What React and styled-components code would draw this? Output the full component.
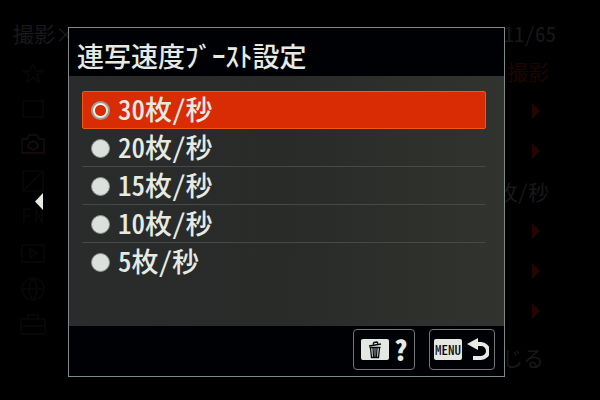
import React, { useState } from "react";
import styled, { createGlobalStyle } from "styled-components";

// CSS
const GlobalStyle = createGlobalStyle`
  * {
    box-sizing: border-box;
  }
  body {
    margin: 0;
    background-color: #000001;
    color: #e6eae4;
    font-family: "Noto Sans CJK JP", "Noto Sans", sans-serif;
    font-feature-settings: "hwid";
  }
`;
const Screen = styled.div`
  display: grid;
  min-height: 100vh;
`;
const MenuPage = styled.div`
  grid-area: 1 / 1;
  display: flex;
  flex-direction: column;
  overflow: hidden;
  color: #171918;
  font-size: 21px;
  line-height: 36px;
`;
const PageHeader = styled.header`
  display: flex;
  justify-content: space-between;
  padding: 15px 44px 0 13px;
  white-space: nowrap;
`;
const PageMain = styled.div`
  display: flex;
`;
const TabList = styled.div`
  display: flex;
  flex-direction: column;
  gap: 8px;
  padding: 8px 0 0 19px;
`;
const TabIcon = styled.svg`
  width: 28px;
  height: 28px;
  fill: none;
  stroke: ${({ $tone }) => $tone || "#070807"};
  stroke-width: 1.5;
`;
const SettingList = styled.div`
  flex: 1;
  display: flex;
  flex-direction: column;
`;
const Setting = styled.div`
  height: 40px;
  display: flex;
  align-items: center;
  justify-content: flex-end;
  padding-right: ${({ $arrow }) => ($arrow ? "60px" : "51px")};
  color: ${({ $red }) => ($red ? "#1e0401" : "#171918")};
`;
const SettingArrow = styled.span`
  border-left: 8px solid #240501;
  border-top: 8px solid transparent;
  border-bottom: 8px solid transparent;
`;
const PageFooter = styled.footer`
  padding-right: 56px;
  text-align: right;
`;
const Overlay = styled.main`
  grid-area: 1 / 1;
  z-index: 1;
  display: flex;
  align-items: center;
  gap: 24px;
  padding: 27px 95px 23px 34px;
`;
const BackButton = styled.button`
  width: 10px;
  padding: 0;
  border: 0;
  background: none;
  line-height: 0;
  cursor: pointer;
`;
const Dialog = styled.form`
  flex: 1;
  background-color: #000105;
  border: 1px solid #7f8b8a;
`;
const DialogTitle = styled.h1`
  margin: 0;
  padding: 8px 8px 0;
  font-size: 27px;
  font-weight: 500;
  line-height: 40px;
  white-space: nowrap;
`;
const Options = styled.fieldset`
  min-width: 0;
  margin: 0;
  padding: 15px 18px 45px 13px;
  border: 0;
  background: linear-gradient(90deg, #292c2b, #282b28 50%, #31332e);
`;
const Option = styled.label`
  height: 38px;
  display: flex;
  align-items: center;
  gap: 8px;
  padding: 0 8px;
  border: 1px solid transparent;
  border-bottom-color: ${({ $last }) => ($last ? "transparent" : "#454a48")};
  font-size: 27px;
  font-weight: 500;
  line-height: 36px;
  cursor: pointer;

  &:has(input:checked) {
    background-color: #d92b04;
    border-color: #ee5a10;
    border-radius: 2px;
  }
`;
const OptionText = styled.span`
  padding-bottom: 2px;
`;
const Radio = styled.input`
  appearance: none;
  width: 19px;
  height: 19px;
  margin: 0;
  border: 1px solid #8e9390;
  border-radius: 50%;
  background-color: #dce0dc;

  &:checked {
    border: 2px solid #9a9c98;
    background: radial-gradient(circle, #d92b04 5px, #f2efe8 6px);
  }
`;
const DialogFooter = styled.div`
  display: flex;
  justify-content: flex-end;
  gap: 14px;
  padding: 3px 9px 6px;
`;
const FooterButton = styled.button`
  height: 41px;
  display: flex;
  align-items: center;
  gap: 5px;
  padding: ${({ $wide }) => ($wide ? "0 5px 0 4px" : "0 7px")};
  border: 1px solid #727876;
  border-radius: 4px;
  background: none;
  color: inherit;
  font: inherit;
  font-feature-settings: inherit;
  cursor: pointer;
`;
const KeyCap = styled.span`
  width: 28px;
  height: 21px;
  display: flex;
  align-items: center;
  justify-content: center;
  border-radius: 2px;
  background-color: #e4e8e3;
  color: #0a0c0c;
  font-size: 13px;
  font-weight: 500;
  line-height: 20px;
`;
const HelpMark = styled.span`
  width: 13px;
  font-size: 27px;
  font-weight: 900;
  line-height: 36px;
`;

const speeds = ["30", "20", "15", "10", "5"];

const tabs = [
  { id: "favorite", d: "M14 5l3 7h7l-6 4 2 7-6-4-6 4 2-7-6-4h7z" },
  { id: "main", d: "M4 6h20v16H4z" },
  {
    id: "shooting",
    tone: "#180e0c",
    d: "M3 8h5l2-4h8l2 4h5v14H3zM14 10l4 2 1 4-5 3-5-3 1-4z",
  },
  { id: "exposure", d: "M4 4h20v20H4zM4 24L24 4" },
  { id: "focus", d: "M5 20V6h7M5 13h6M17 20V6l6 14V6" },
  { id: "playback", d: "M3 6h22v17H3zM11 10l7 4-7 5z" },
  { id: "network", d: "M14 3a11 11 0 1 0 0 22a11 11 0 1 0 0-22M3 14h22M14 3q-8 11 0 22M14 3q8 11 0 22" },
  { id: "setup", d: "M2 8h24v15H2zM9 8V4h10v4M2 15h24" },
];

const settings = [
  { id: "mode", text: "撮影", red: true },
  { id: "drive", arrow: true },
  { id: "bracket", arrow: true },
  { id: "boost", text: "枚/秒" },
  { id: "timer", arrow: true },
  { id: "interval", arrow: true },
  { id: "shutter", arrow: true },
];

// Dimmed menu that stays visible around the dialog
function BackgroundMenu() {
  return (
    <MenuPage aria-hidden="true">
      <PageHeader>
        <span>撮影×</span>
        <span>11/65</span>
      </PageHeader>
      <PageMain>
        <TabList>
          {tabs.map(({ id, tone, d }) => (
            <TabIcon key={id} $tone={tone} viewBox="0 0 28 28">
              <path d={d} />
            </TabIcon>
          ))}
        </TabList>
        <SettingList>
          {settings.map(({ id, text, red, arrow }) => (
            <Setting key={id} $red={red} $arrow={arrow}>
              {arrow ? <SettingArrow /> : text}
            </Setting>
          ))}
        </SettingList>
      </PageMain>
      <PageFooter>じる</PageFooter>
    </MenuPage>
  );
}

function App() {
  const [speed, setSpeed] = useState("30");

  return (
    <Screen>
      <GlobalStyle />
      <BackgroundMenu />
      <Overlay>
        <BackButton type="button" aria-label="戻る">
          <svg width="10" height="18" viewBox="0 0 10 18">
            <path d="M9 0v17L1 8.5z" fill="#e6eae4" />
          </svg>
        </BackButton>
        <Dialog>
          <DialogTitle id="speed-title">連写速度ﾌﾞｰｽﾄ設定</DialogTitle>
          <Options aria-labelledby="speed-title">
            {speeds.map((value, index) => (
              <Option key={value} $last={index === speeds.length - 1}>
                <Radio
                  type="radio"
                  name="speed"
                  value={value}
                  checked={speed === value}
                  onChange={() => setSpeed(value)}
                />
                <OptionText>{value}枚/秒</OptionText>
              </Option>
            ))}
          </Options>
          <DialogFooter>
            <FooterButton type="button" aria-label="ヘルプ">
              <KeyCap>
                <svg width="14" height="18" viewBox="0 0 14 18" fill="none" stroke="#0a0c0c">
                  <path d="M1 5L13 3M5 3.5l1-2 3-.4 1 1.4" strokeWidth="1.4" />
                  <path d="M1.5 6.500h11M2.500 7l1 9.500h7l1-9.500M5 7l.5 9M7 7v9M9 7l-.5 9" strokeWidth="1.3" />
                </svg>
              </KeyCap>
              <HelpMark>?</HelpMark>
            </FooterButton>
            <FooterButton type="button" $wide aria-label="メニューに戻る">
              <KeyCap>MENU</KeyCap>
              <svg width="22" height="24" viewBox="0 0 22 24">
                <path d="M0 6L11 0v12z" fill="#e6eae4" />
                <path d="M9 6h5a6.5 6.5 0 0 1 0 14H6" fill="none" stroke="#e6eae4" strokeWidth="4" />
              </svg>
            </FooterButton>
          </DialogFooter>
        </Dialog>
      </Overlay>
    </Screen>
  );
}

export default App;
